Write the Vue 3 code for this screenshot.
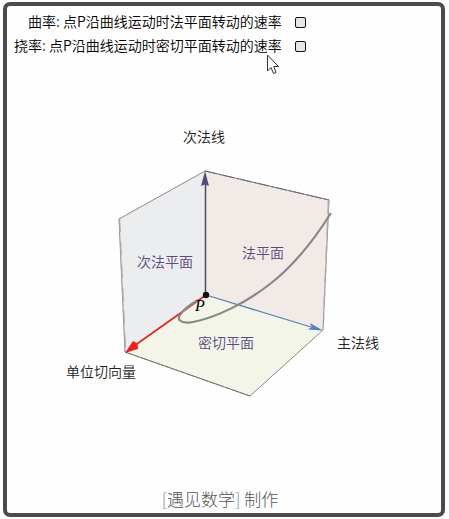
<script setup>
import { ref } from 'vue'

const options = ref([
  { id: 'curvature', label: '曲率: 点P沿曲线运动时法平面转动的速率', on: false },
  { id: 'torsion', label: '挠率: 点P沿曲线运动时密切平面转动的速率', on: false }
])
</script>

<template>
  <main class="frame">
    <form class="options">
      <div v-for="o in options" :key="o.id" class="option">
        <label :for="o.id">{{ o.label }}</label>
        <input :id="o.id" v-model="o.on" type="checkbox" class="box" />
      </div>
      <svg class="pointer" width="14" height="21" viewBox="0 0 14 21" aria-hidden="true">
        <path d="M1.500 1V17L5 13.500L7.500 19.500L10 18.500L7.800 12.500H12.500Z" fill="#fff" stroke="#333" />
      </svg>
    </form>

    <svg class="diagram" width="328" height="280" viewBox="60 124 328 280">
      <polygon points="205,171 119,219 125,352 206,295" fill="#ebedef" />
      <polygon points="205,171 329,200 323,330 206,295" fill="#f2eae7" />
      <polygon points="206,295 125,352 250,396 323,330" fill="#f3f5e9" />
      <g fill="none" stroke="#888" stroke-width="1">
        <path d="M205 171L119 219L125 352L250 396L323 330L329 200Z" />
        <path d="M125 352L250 396" stroke="#777" stroke-dasharray="9 1 5 1" />
        <path d="M205 171L329 200" stroke="#666" stroke-dasharray="12 2 3 1" />
        <path d="M119.500 219L125.500 352M328.500 200L323.500 320" stroke="#aaa" stroke-width="1.500" stroke-dasharray="13 10" />
      </g>
      <path d="M205.500 295V184" stroke="#514b5c" stroke-width="1.500" />
      <path d="M205 171L201 186L205 184.500L209 186Z" fill="#574b7d" />
      <path d="M206 295L311 327" stroke="#5b7fb5" stroke-width="1.300" />
      <path d="M323 330.500L310 323L311.500 327L308 329.500Z" fill="#5582bd" />
      <path d="M206 295L134 346" stroke="#e22525" stroke-width="1.700" />
      <path d="M125 353L133 341L137.500 343.500L138 349Z" fill="#ed2020" />
      <path
        d="M331 213C314 240 292 267 270 284C247 302 218 317 193 322C182 324 176 320 180 315C184 309 191 304 198 300"
        fill="none" stroke="#888" stroke-width="2.200"
      />
      <circle cx="206" cy="295" r="3.200" fill="#111" />
      <text class="point" x="195" y="311">P</text>
      <g class="axis">
        <text x="183" y="142">次法线</text>
        <text x="337" y="348">主法线</text>
        <text x="66" y="377">单位切向量</text>
      </g>
      <g class="plane">
        <text x="137" y="267">次法平面</text>
        <text x="242" y="258">法平面</text>
        <text x="198" y="348">密切平面</text>
      </g>
    </svg>

    <footer class="credit"><span class="bracket">[</span>遇见数学<span class="bracket">]</span> 制作</footer>
  </main>
</template>

<style>
body {
  margin: 0;
  background: #fff;
}
</style>

<style scoped>
.frame {
  box-sizing: border-box;
  display: flex;
  flex-direction: column;
  align-items: center;
  min-height: calc(100vh - 4px);
  margin: 2px 4px 2px 3px;
  padding: 4px 4px 2px;
  border: 4px solid #4b4b4b;
  border-radius: 7px;
  background: #fefefe;
  color: #111;
  font-family: "Noto Sans CJK SC", sans-serif;
  font-size: 14px;
  font-weight: 350;
}

.options {
  position: relative;
  align-self: flex-start;
  padding-left: 3px;
}

.option {
  display: flex;
  align-items: center;
  justify-content: flex-end;
  gap: 13px;
  height: 24px;
  color: #000;
}

.option label {
  padding-bottom: 2px;
  line-height: 22px;
}

.box {
  box-sizing: border-box;
  appearance: none;
  width: 11px;
  height: 11px;
  margin: 0;
  border: 1px solid #111;
  border-radius: 2px;
  background: #e6e6e6;
}

.box:checked {
  background: #555;
}

.pointer {
  position: absolute;
  right: 26px;
  bottom: -17px;
}

.diagram {
  display: block;
  max-width: 100%;
  margin-top: 66px;
}

.axis {
  fill: #222;
}

.plane {
  fill: #574b7d;
}

.point {
  fill: #000;
  font-family: "Liberation Serif", serif;
  font-size: 16px;
  font-style: italic;
}

.credit {
  margin-top: auto;
  padding-right: 8px;
  color: #555;
  font-size: 17px;
  font-weight: 300;
  line-height: 24px;
}

.bracket {
  color: #6f8fae;
}
</style>
